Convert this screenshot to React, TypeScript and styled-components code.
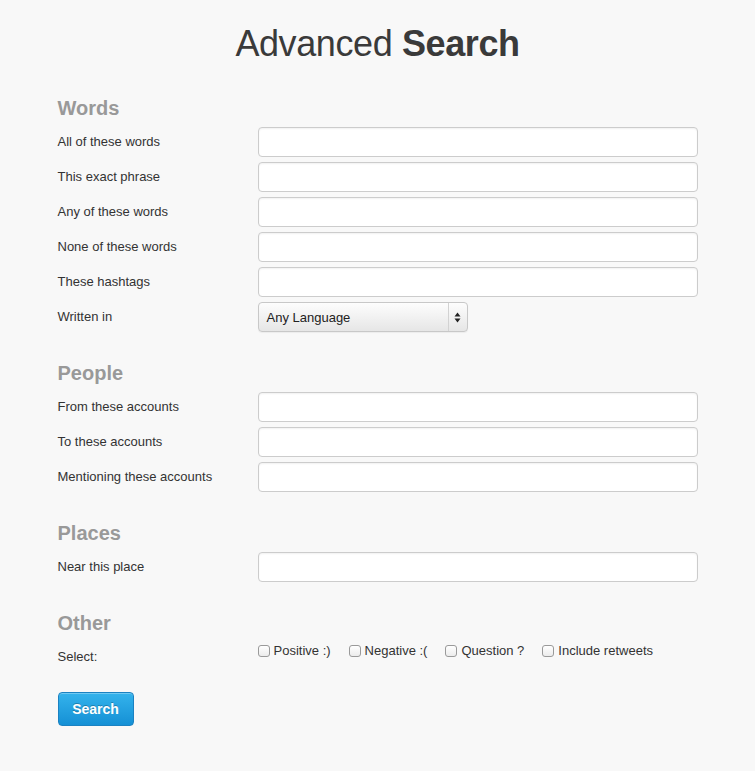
import React from "react";
import { styled, createGlobalStyle } from "styled-components";

const GlobalStyle = createGlobalStyle`
  html, body {
    margin: 0;
    padding: 0;
    background: #f8f8f8;
  }
  body {
    font-family: "Liberation Sans", Arial, sans-serif;
    color: #333;
  }
`;

const Page = styled.div`
  width: 640px;
  margin: 0 auto;
  padding: 24px 0 45px;
`;

const Title = styled.h1`
  margin: 0 0 31px;
  font-size: 36px;
  line-height: 40px;
  font-weight: normal;
  text-align: center;
  color: #3a3a3a;
  letter-spacing: -0.4px;

  strong {
    font-weight: bold;
  }
`;

const Section = styled.section`
  margin-bottom: 28px;
`;

const Heading = styled.h2`
  margin: 0 0 7px;
  padding-top: 1px;
  font-size: 20px;
  line-height: 24px;
  font-weight: bold;
  color: #999;
`;

const Rows = styled.div`
  display: flex;
  flex-direction: column;
  gap: 5px;
`;

const Row = styled.div`
  display: flex;
  align-items: center;
  min-height: 30px;
`;

const CheckRow = styled.div`
  display: flex;
  align-items: flex-start;
  padding-top: 1px;
`;

const Label = styled.label<{ $offset?: number }>`
  width: 200px;
  flex-shrink: 0;
  font-size: 13px;
  line-height: 16px;
  color: #333;
  padding-top: ${p => p.$offset ?? 0}px;
`;

const TextInput = styled.input`
  box-sizing: border-box;
  width: 440px;
  height: 30px;
  padding: 4px 8px;
  border: 1px solid #ccc;
  border-radius: 4px;
  background: #fff;
  box-shadow: inset 0 1px 2px rgba(0, 0, 0, 0.06);
  font: 13px "Liberation Sans", Arial, sans-serif;
  outline: none;
`;

const SelectBox = styled.div`
  box-sizing: border-box;
  display: flex;
  width: 210px;
  height: 30px;
  border: 1px solid #c8c8c8;
  border-radius: 4px;
  background: linear-gradient(#fdfdfd, #e6e6e6);
  box-shadow: 0 1px 1px rgba(0, 0, 0, 0.05);
`;

const SelectValue = styled.span`
  flex: 1;
  display: flex;
  align-items: center;
  padding-left: 8px;
  font-size: 13px;
  color: #222;
`;

const SelectArrow = styled.span`
  width: 18px;
  border-left: 1px solid #d2d2d2;
  display: flex;
  align-items: center;
  justify-content: center;
`;

const Checks = styled.div`
  display: flex;
  align-items: center;
`;

const CheckLabel = styled.label`
  display: flex;
  align-items: center;
  margin-right: 18px;
  font-size: 13px;
  line-height: 16px;
  color: #333;
`;

const Box = styled.span`
  box-sizing: border-box;
  width: 12px;
  height: 12px;
  margin-right: 4px;
  border: 1px solid #9a9a9a;
  border-radius: 3px;
  background: linear-gradient(#fff, #ececec);
`;

const SearchButton = styled.button`
  margin: -1px 0 0;
  width: 76px;
  height: 34px;
  border: 1px solid #1b82c2;
  border-radius: 4px;
  background: linear-gradient(#34b3ec, #1590d5);
  color: #fff;
  font: bold 14px "Liberation Sans", Arial, sans-serif;
  text-shadow: 0 -1px 0 rgba(0, 0, 0, 0.25);
  box-shadow: inset 0 1px 0 rgba(255, 255, 255, 0.3);
  cursor: pointer;
`;

const words = [
  "All of these words",
  "This exact phrase",
  "Any of these words",
  "None of these words",
  "These hashtags",
];

const people = ["From these accounts", "To these accounts", "Mentioning these accounts"];

const checks = ["Positive :)", "Negative :(", "Question ?", "Include retweets"];

function InputRow({ label }: { label: string }) {
  return (
    <Row>
      <Label>{label}</Label>
      <TextInput type="text" />
    </Row>
  );
}

export default function App() {
  return (
    <>
      <GlobalStyle />
      <Page>
        <Title>
          Advanced <strong>Search</strong>
        </Title>

        <Section>
          <Heading>Words</Heading>
          <Rows>
            {words.map(w => (
              <InputRow key={w} label={w} />
            ))}
            <Row>
              <Label>Written in</Label>
              <SelectBox>
                <SelectValue>Any Language</SelectValue>
                <SelectArrow>
                  <svg width="7" height="11" viewBox="0 0 7 11">
                    <path d="M3.5 0.5 L6.5 4.5 H0.5 Z M3.5 10.5 L6.5 6.5 H0.5 Z" fill="#222" />
                  </svg>
                </SelectArrow>
              </SelectBox>
            </Row>
          </Rows>
        </Section>

        <Section>
          <Heading>People</Heading>
          <Rows>
            {people.map(p => (
              <InputRow key={p} label={p} />
            ))}
          </Rows>
        </Section>

        <Section>
          <Heading>Places</Heading>
          <Rows>
            <InputRow label="Near this place" />
          </Rows>
        </Section>

        <Section>
          <Heading>Other</Heading>
          <CheckRow>
            <Label $offset={6}>Select:</Label>
            <Checks>
              {checks.map(c => (
                <CheckLabel key={c}>
                  <Box />
                  {c}
                </CheckLabel>
              ))}
            </Checks>
          </CheckRow>
        </Section>

        <SearchButton>Search</SearchButton>
      </Page>
    </>
  );
}
